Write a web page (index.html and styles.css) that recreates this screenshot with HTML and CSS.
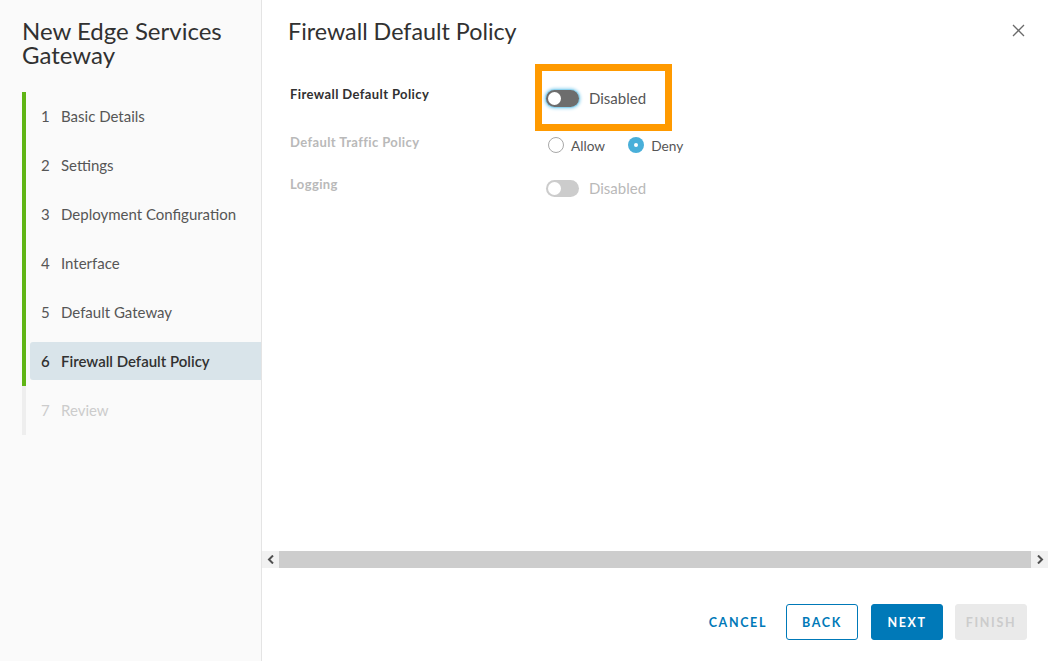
FILE: index.html
```html
<!DOCTYPE html>
<html lang="en">
<head>
<meta charset="utf-8">
<title>New Edge Services Gateway</title>
<link rel="stylesheet" href="styles.css">
</head>
<body>
<div class="app">
  <aside class="sidebar">
    <h1 class="wiz-title">New Edge Services Gateway</h1>
    <ol class="steps">
      <li class="step done"><span class="step-btn"><span class="num">1</span>Basic Details</span></li>
      <li class="step done"><span class="step-btn"><span class="num">2</span>Settings</span></li>
      <li class="step done"><span class="step-btn"><span class="num">3</span>Deployment Configuration</span></li>
      <li class="step done"><span class="step-btn"><span class="num">4</span>Interface</span></li>
      <li class="step done"><span class="step-btn"><span class="num">5</span>Default Gateway</span></li>
      <li class="step done active"><span class="step-btn"><span class="num">6</span>Firewall Default Policy</span></li>
      <li class="step todo"><span class="step-btn"><span class="num">7</span>Review</span></li>
    </ol>
  </aside>
  <main class="main">
    <header class="main-head">
      <h2 class="page-title">Firewall Default Policy</h2>
      <button class="close" aria-label="Close">
        <svg width="13" height="13" viewBox="0 0 13 13"><path d="M1 1 L12 12 M12 1 L1 12" stroke="#6a6a6a" stroke-width="1.3" fill="none"/></svg>
      </button>
    </header>
    <div class="body">
      <div class="form">
        <div class="row row-1">
          <div class="label">Firewall Default Policy</div>
          <div class="control">
            <span class="toggle focus"><span class="knob"></span></span>
            <span class="ctl-text">Disabled</span>
          </div>
        </div>
        <div class="row row-2">
          <div class="label muted">Default Traffic Policy</div>
          <div class="control radios">
            <span class="radio"></span><span class="ctl-text radio-text">Allow</span>
            <span class="radio checked"></span><span class="ctl-text radio-text">Deny</span>
          </div>
        </div>
        <div class="row row-3">
          <div class="label muted">Logging</div>
          <div class="control">
            <span class="toggle disabled"><span class="knob"></span></span>
            <span class="ctl-text dim">Disabled</span>
          </div>
        </div>
      </div>
    </div>
    <div class="hscroll">
      <span class="sb-btn"><svg width="8" height="9" viewBox="0 0 8 9"><path d="M6 0.5 L2 4.5 L6 8.5" stroke="#505050" stroke-width="2" fill="none"/></svg></span>
      <span class="sb-thumb"></span>
      <span class="sb-btn"><svg width="8" height="9" viewBox="0 0 8 9"><path d="M2 0.5 L6 4.5 L2 8.5" stroke="#505050" stroke-width="2" fill="none"/></svg></span>
    </div>
    <footer class="footer">
      <button class="btn btn-link">CANCEL</button>
      <button class="btn btn-outline">BACK</button>
      <button class="btn btn-primary">NEXT</button>
      <button class="btn btn-disabled">FINISH</button>
    </footer>
  </main>
  <div class="highlight"></div>
</div>
</body>
</html>
```
FILE: styles.css
```css
* { box-sizing: border-box; }
html, body { margin: 0; padding: 0; }
body {
  font-family: Lato, "Open Sans", "Liberation Sans", sans-serif;
  color: #565656;
  background: #fff;
}
.app {
  position: relative;
  display: flex;
  width: 1048px;
  height: 661px;
  overflow: hidden;
}
.sidebar {
  width: 262px;
  flex: 0 0 262px;
  background: #fafafa;
  border-right: 1px solid #e4e4e4;
  padding-top: 19px;
}
.wiz-title {
  margin: 0;
  padding: 0 10px 0 22px;
  font-size: 24px;
  line-height: 24px;
  font-weight: 400;
  color: #313131;
}
.steps {
  list-style: none;
  margin: 25px 0 0 22px;
  padding: 0;
}
.step {
  height: 49px;
  padding: 5px 0 6px 4px;
  border-left: 4px solid #60b515;
}
.step.todo { border-left-color: #eeeeee; }
.step-btn {
  display: flex;
  align-items: center;
  height: 38px;
  padding-left: 11px;
  font-size: 15px;
  color: #565656;
  border-radius: 3px 0 0 3px;
}
.num { width: 20px; flex: 0 0 20px; }
.step.active .step-btn {
  background: #d9e4ea;
  color: #313131;
  font-weight: 600;
}
.step.todo .step-btn { color: #cccccc; }

.main {
  flex: 1;
  display: flex;
  flex-direction: column;
  min-width: 0;
}
.main-head {
  display: flex;
  align-items: flex-start;
  justify-content: space-between;
  padding: 19px 23px 0 26px;
}
.page-title {
  margin: 0;
  font-size: 23.3px;
  line-height: 24px;
  font-weight: 400;
  color: #313131;
}
.close {
  border: 0;
  background: none;
  padding: 0;
  margin-top: 5px;
  width: 13px;
  height: 13px;
  line-height: 0;
}
.body { flex: 1; padding: 42px 0 0 28px; }
.row { display: flex; }
.row-1 { margin-bottom: 26px; }
.row-2 { margin-bottom: 21px; }
.label {
  width: 256px;
  flex: 0 0 256px;
  font-size: 13px;
  line-height: 18px;
  font-weight: 700;
  letter-spacing: 0.4px;
  color: #313131;
}
.label.muted { color: #b9b9b9; }
.control {
  display: flex;
  align-items: center;
  height: 18px;
  margin-top: 4px;
  font-size: 15px;
}
.control.radios { margin-top: 3px; }
.toggle {
  position: relative;
  width: 33px;
  height: 17px;
  border-radius: 9px;
  background: #6d6d6d;
}
.toggle .knob {
  position: absolute;
  left: 2px;
  top: 2px;
  width: 13px;
  height: 13px;
  border-radius: 50%;
  background: #fff;
}
.toggle.focus {
  box-shadow: 0 0 0 1px #8fd3ef, 0 0 3px 2px #a8dcf2;
}
.toggle.disabled { background: #cccccc; }
.ctl-text { margin-left: 10px; color: #565656; }
.ctl-text.dim { color: #b9b9b9; }
.radio {
  width: 16px;
  height: 16px;
  border-radius: 50%;
  border: 1px solid #a8a8a8;
  background: #fff;
  margin-left: 2px;
  position: relative;
}
.radio.checked {
  border: 0;
  background: #49afd9;
  margin-left: 23px;
}
.radio.checked::after {
  content: "";
  position: absolute;
  left: 6px;
  top: 6px;
  width: 4px;
  height: 4px;
  border-radius: 50%;
  background: #fff;
}
.radio-text { margin-left: 7px; font-size: 13.7px; }

.hscroll {
  display: flex;
  height: 17px;
  background: #f1f1f1;
}
.sb-btn {
  width: 17px;
  flex: 0 0 17px;
  display: flex;
  align-items: center;
  justify-content: center;
}
.sb-thumb { flex: 1; background: #cdcdcd; }

.footer {
  display: flex;
  justify-content: flex-end;
  align-items: flex-start;
  height: 93px;
  padding: 36px 21px 0 0;
}
.btn {
  height: 36px;
  width: 72px;
  padding: 0;
  border-radius: 3px;
  font-family: Lato, "Open Sans", "Liberation Sans", sans-serif;
  font-size: 12.5px;
  font-weight: 700;
  letter-spacing: 0.13em;
  border: 1px solid transparent;
  margin-left: 13px;
}
.btn-link {
  width: auto;
  background: none;
  color: #0079b8;
  margin-right: 5px;
}
.btn-outline { background: #fff; border-color: #0079b8; color: #0079b8; }
.btn-primary { background: #0079b8; border-color: #0079b8; color: #fff; }
.btn-disabled { background: #eaeaea; border-color: #eaeaea; color: #cccccc; margin-left: 12px; }

.highlight {
  position: absolute;
  left: 535px;
  top: 64px;
  width: 137px;
  height: 67px;
  border: 7px solid #ff9a00;
  pointer-events: none;
}
```
